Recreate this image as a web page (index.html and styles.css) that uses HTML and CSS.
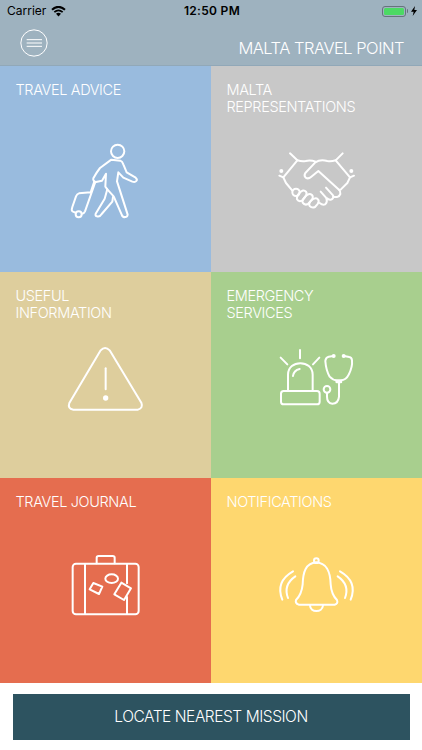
FILE: index.html
```html
<!DOCTYPE html>
<html lang="en">
<head>
    <meta charset="UTF-8">
    <meta name="viewport" content="width=device-width, initial-scale=1.0">
    <title>Malta Travel Point</title>
    <link rel="stylesheet" href="styles.css">
</head>
<body>

<header class="header">
    <div class="status">
        <div class="carrier">
            <span>Carrier</span>
            <svg class="wifi" viewBox="0 0 45 32">
                <path d="M3 11 Q22 -7 42 11" stroke-width="6"/>
                <path d="M10 18 Q22 7 35 18" stroke-width="5.5"/>
                <path d="M15 23 Q22 17 30 23 L22.5 31 Z" fill="#000" stroke="none"/>
            </svg>
        </div>
        <span class="time">12:50 PM</span>
        <div class="power">
            <span class="battery"><span class="charge"></span></span>
            <span class="nub"></span>
            <svg class="bolt" viewBox="0 0 18 30"><path d="M12 0 L0 17 H8 L5 30 L18 12 H10 Z"/></svg>
        </div>
    </div>
    <div class="nav">
        <button class="menu" aria-label="Menu">
            <svg viewBox="0 0 84 84">
                <circle cx="42" cy="42" r="39.5"/>
                <path d="M20 32 H66 M20 42 H66 M20 52 H66"/>
            </svg>
        </button>
        <h1>MALTA TRAVEL POINT</h1>
    </div>
</header>

<main class="tiles">
    <a class="tile blue">
        <span class="label">TRAVEL ADVICE</span>
        <svg class="icon" viewBox="0 -6 270 270">
            <circle cx="173" cy="49" r="20"/>
            <path d="M154 74 L181 77 Q187 79 190 88 L200 112 L227 128 Q233 133 229 138 Q225 143 217 140 L190 128 L175 112 L171 139 L178 161 L203 239 Q202 247 195 246 Q188 248 185 239 L161 184 L142 163 L136 155 L138 116 L126 137 L108 141 Q98 139 100 130 Q111 110 120 99 Z"/>
            <path d="M142 163 L134 191 L107 236 Q105 243 111 244 Q119 247 125 237 L157 200 L159 186"/>
            <path d="M103 139 L92 172 L57 175 Q51 177 48 184 L37 216 Q33 227 39 230 L46 233 M66 236 Q72 236 75 229 L106 141"/>
            <circle cx="56" cy="238" r="9"/>
        </svg>
    </a>
    <a class="tile grey">
        <span class="label">MALTA<br>REPRESENTATIONS</span>
        <svg class="icon" viewBox="3 -6 270 270">
            <path d="M60 55 L82 76 L40 127 L28 122 M218 55 L197 76 L240 127 L252 122"/>
            <path d="M82 76 Q96 80 107 78 Q121 74 137 80 M197 76 Q183 80 172 78 Q151 72 136 82 L106 114 Q101 122 107 128 Q115 133 123 126 L145 108 L207 164"/>
            <path d="M40 127 L48 144 L67 167 M240 127 L232 144 L212 164"/>
            <circle cx="78" cy="172" r="11"/>
            <path d="M88 174 Q100 161 108 170 Q113 177 105 186 L96 197 Q86 202 81 193 Q79 185 88 174 Z"/>
            <path d="M105 186 Q116 172 126 180 Q132 187 123 197 L114 207 Q104 212 98 203 Q95 197 105 186 Z"/>
            <path d="M123 197 Q136 185 144 193 Q149 199 142 208 L135 216 Q126 220 119 213 Q115 207 123 197 Z"/>
            <path d="M168 158 L189 181 Q192 192 182 194 Q176 195 170 189 M152 170 L168 188 Q174 202 165 208 Q158 211 149 204 M189 184 Q205 191 211 177 Q212 169 207 164"/>
            <circle class="dot" cx="34" cy="108" r="6"/>
            <circle class="dot" cx="244" cy="108" r="6"/>
        </svg>
    </a>
    <a class="tile sand">
        <span class="label">USEFUL<br>INFORMATION</span>
        <svg class="icon" viewBox="0 12 270 270">
            <path d="M122 46 Q135 32 149 46 L244 203 Q250 219 234 224 H40 Q22 221 28 204 Z"/>
            <path d="M137 100 V163"/>
            <circle class="dot" cx="137" cy="189" r="8"/>
        </svg>
    </a>
    <a class="tile green">
        <span class="label">EMERGENCY<br>SERVICES</span>
        <svg class="icon" viewBox="3 12 270 270">
            <rect x="33" y="168" width="116" height="40" rx="8"/>
            <path d="M54 167 V119 C54 73 128 73 128 119 V167 M69 123 Q71 106 89 102"/>
            <path d="M90 45 V70 M32 68 L52 88 M148 68 L129 88"/>
            <path d="M190 63 L176 65 Q167 67 166 78 Q168 106 179 125 Q189 136 201 136 H212 Q229 135 236 119 Q248 96 246 76 Q245 67 238 66 L222 63"/>
            <path d="M207 138 V185 Q205 206 187 206 Q171 204 171 185 V175"/>
            <path d="M201 140 H212" stroke-width="10"/>
            <circle cx="171" cy="163" r="10"/>
            <circle class="dot" cx="191" cy="63" r="6"/>
            <circle class="dot" cx="221" cy="63" r="6"/>
        </svg>
    </a>
    <a class="tile red">
        <span class="label">TRAVEL JOURNAL</span>
        <svg class="icon" viewBox="0 0 270 270">
            <rect x="38" y="56" width="198" height="152" rx="10"/>
            <path d="M110 55 V38 Q110 33 116 33 H158 Q164 33 164 38 V55 M75 57 V207 M201 57 V115 M201 156 V207"/>
            <path d="M100 114 L127 125 L117 147 L89 133 Z M184 113 L213 130 L192 165 L163 148 Z"/>
            <ellipse cx="155" cy="101" rx="19" ry="13"/>
        </svg>
    </a>
    <a class="tile yellow">
        <span class="label">NOTIFICATIONS</span>
        <svg class="icon" viewBox="3 0 270 270">
            <path d="M86 179 Q75 175 78 165 Q95 148 98 118 C99 82 106 55 139 52 C172 55 181 82 182 118 Q184 148 201 165 Q205 176 194 179 Z"/>
            <circle cx="139" cy="47" r="7"/>
            <path d="M120 181 C121 204 157 204 159 181"/>
            <path d="M76 94 Q39 119 54 159 M69 79 Q15 110 37 164 M203 94 Q240 119 225 159 M210 79 Q264 110 242 164"/>
        </svg>
    </a>
</main>

<footer class="footer">
    <button class="locate">LOCATE NEAREST MISSION</button>
</footer>

</body>
</html>
```
FILE: styles.css
```css
* { box-sizing: border-box; }
body { margin: 0; height: 750px; background: #fff; font-family: Inter, "Liberation Sans", sans-serif; display: flex; flex-direction: column; overflow: hidden; }
button { border: none; padding: 0; font-family: inherit; color: #fff; }

.header { height: 66px; background: #9eb2bf; border-bottom: 1px solid #91a8b8; }
.status { height: 22px; padding: 0 5px 0 7px; display: grid; grid-template-columns: 1fr auto 1fr; align-items: center; font-size: 12px; line-height: 22px; color: #000; }
.carrier { display: flex; align-items: center; gap: 5px; }
.wifi { width: 15px; height: 11px; fill: none; stroke: #000; }
.time { font-weight: 600; letter-spacing: 0.3px; }
.power { display: flex; align-items: center; justify-content: flex-end; }
.battery { width: 24px; height: 11px; padding: 1px; border: 1px solid #66737c; border-radius: 3px; display: flex; }
.charge { flex: 1; background: #4cd964; border-radius: 1.5px; }
.nub { width: 1.5px; height: 4px; margin-left: 1px; background: #66737c; border-radius: 0 2px 2px 0; }
.bolt { width: 6px; height: 10px; margin-left: 3px; }

.nav { height: 43px; padding: 0 18px 0 20px; display: flex; align-items: center; justify-content: space-between; }
.menu { width: 28px; height: 28px; margin-bottom: 1px; background: none; }
.menu svg { display: block; width: 28px; height: 28px; fill: none; stroke: #fff; stroke-width: 3; }
h1 { margin: 9px 0 0; font-size: 16.5px; font-weight: 350; letter-spacing: -0.5px; line-height: 20px; color: #fff; }

.tiles { height: 617.5px; display: grid; grid-template: repeat(3, 1fr) / 1fr 1fr; }
.tile { padding: 15px 15.5px 0; color: #fff; }
.label { display: block; height: 52px; font-size: 14.5px; font-weight: 350; letter-spacing: -0.37px; line-height: 17px; }
.icon { display: block; width: 90px; height: 90px; margin-left: 44.5px; fill: none; stroke: #fff; stroke-width: 6; stroke-linecap: round; stroke-linejoin: round; }
.dot { fill: #fff; stroke: none; }
.blue { background: #99bbde; }
.grey { background: #c8c8c8; }
.sand { background: #dece9d; }
.green { background: #a8cf8e; }
.red { background: #e56d4f; }
.yellow { background: #fed76f; }

.footer { padding: 10px 12.5px 0; }
.locate { display: block; width: 100%; height: 46px; background: #2d5360; font-size: 15.5px; font-weight: 350; letter-spacing: -0.45px; line-height: 46px; }
```
